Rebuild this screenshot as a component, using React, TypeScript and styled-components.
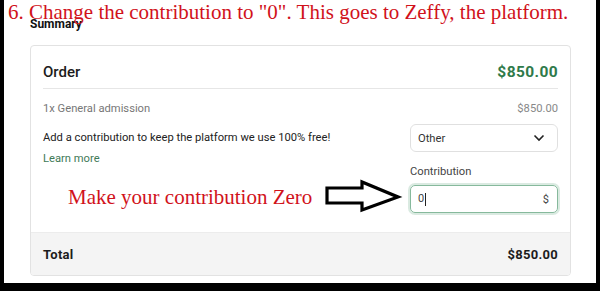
import React from "react";
import styled, { createGlobalStyle } from "styled-components";

const Global = createGlobalStyle`
  html, body { margin: 0; padding: 0; background: #fff; }
  * { box-sizing: border-box; }
`;

const Frame = styled.div`
  position: relative;
  width: 600px;
  height: 291px;
  background: #fff;
  border-left: 4px solid #000;
  border-right: 4px solid #000;
  border-bottom: 8px solid #000;
  padding: 16px 25px 0 26px;
  font-family: Roboto, "Liberation Sans", sans-serif;
  color: #222;
  overflow: hidden;
`;

const Heading = styled.div`
  font-size: 12px;
  font-weight: 700;
  line-height: 16px;
  color: #111;
`;

const Card = styled.div`
  margin-top: 13px;
  border: 1px solid #e2e2e2;
  border-radius: 4px;
  background: #fff;
  overflow: hidden;
`;

const Header = styled.div`
  margin: 0 12px;
  height: 43px;
  display: flex;
  align-items: center;
  justify-content: space-between;
  border-bottom: 1px solid #e6e6e6;
  padding-top: 10px;
`;

const Title = styled.div`
  font-size: 15px;
  font-weight: 500;
  color: #1c1c1c;
`;

const Price = styled.div<{ $tone: "green" | "muted" | "dark" }>`
  font-size: ${(p) => (p.$tone === "muted" ? "11.2px" : p.$tone === "green" ? "15.5px" : "13px")};
  font-weight: ${(p) => (p.$tone === "muted" ? 400 : 700)};
  color: ${(p) => (p.$tone === "green" ? "#2f7a4a" : p.$tone === "muted" ? "#888" : "#1c1c1c")};
  letter-spacing: ${(p) => (p.$tone === "muted" ? "0" : "0.4px")};
`;

const Body = styled.div`
  padding: 11px 12px 19px;
  display: flex;
  flex-direction: column;
`;

const Line = styled.div`
  display: flex;
  justify-content: space-between;
  align-items: center;
  height: 16px;
`;

const Muted = styled.div`
  font-size: 11.2px;
  color: #777;
`;

const Contrib = styled.div`
  margin-top: 8px;
  display: grid;
  grid-template-columns: 1fr 148px;
  column-gap: 20px;
`;

const LeftCol = styled.div`
  display: flex;
  flex-direction: column;
  padding-top: 6px;
  gap: 5px;
`;

const Text = styled.div`
  font-size: 11.2px;
  color: #222;
  line-height: 16px;
`;

const Link = styled.div`
  font-size: 11.2px;
  color: #3f7a57;
  line-height: 16px;
`;

const RightCol = styled.div`
  display: flex;
  flex-direction: column;
`;

const Select = styled.div`
  height: 28px;
  border: 1px solid #e0e0e0;
  border-radius: 6px;
  display: flex;
  align-items: center;
  justify-content: space-between;
  padding: 0 12px 0 7px;
  font-size: 11.2px;
  color: #333;
`;

const Label = styled.div`
  margin-top: 12px;
  font-size: 11.2px;
  color: #444;
  line-height: 16px;
`;

const Input = styled.div`
  margin-top: 5px;
  height: 28px;
  border: 1.5px solid #86b99c;
  border-radius: 5px;
  box-shadow: 0 0 0 2px rgba(134, 185, 156, 0.3);
  display: flex;
  align-items: center;
  justify-content: space-between;
  padding: 0 8px 0 7px;
  font-size: 11px;
  color: #444;
`;

const Caret = styled.span`
  display: inline-block;
  width: 1px;
  height: 13px;
  background: #222;
  margin-left: 1px;
  vertical-align: middle;
`;

const Footer = styled.div`
  height: 43px;
  background: #f4f4f4;
  border-top: 1px solid #ececec;
  display: flex;
  align-items: center;
  justify-content: space-between;
  padding: 0 12px;
`;

const Strong = styled.div`
  font-size: 13px;
  font-weight: 700;
  color: #1c1c1c;
  letter-spacing: 0.3px;
`;

const Annotation = styled.div<{ $top: number; $left: number; $size: number }>`
  position: absolute;
  top: ${(p) => p.$top}px;
  left: ${(p) => p.$left}px;
  font-family: "Liberation Serif", "Times New Roman", serif;
  font-size: ${(p) => p.$size}px;
  color: #d1121b;
  white-space: nowrap;
  line-height: 1;
`;

const Arrow = styled.svg`
  position: absolute;
  left: 321px;
  top: 179px;
`;

export default function App() {
  return (
    <>
      <Global />
      <Frame>
        <Heading>Summary</Heading>
        <Card>
          <Header>
            <Title>Order</Title>
            <Price $tone="green">$850.00</Price>
          </Header>
          <Body>
            <Line>
              <Muted>1x General admission</Muted>
              <Price $tone="muted">$850.00</Price>
            </Line>
            <Contrib>
              <LeftCol>
                <Text>Add a contribution to keep the platform we use 100% free!</Text>
                <Link>Learn more</Link>
              </LeftCol>
              <RightCol>
                <Select>
                  <span>Other</span>
                  <svg width="12" height="8" viewBox="0 0 12 8">
                    <path d="M1.5 1.5 L6 6 L10.5 1.5" fill="none" stroke="#222" strokeWidth="1.6" />
                  </svg>
                </Select>
                <Label>Contribution</Label>
                <Input>
                  <span>
                    0<Caret />
                  </span>
                  <span>$</span>
                </Input>
              </RightCol>
            </Contrib>
          </Body>
          <Footer>
            <Strong>Total</Strong>
            <Strong>$850.00</Strong>
          </Footer>
        </Card>
        <Annotation $top={2} $left={4} $size={21}>
          6. Change the contribution to "0". This goes to Zeffy, the platform.
        </Annotation>
        <Annotation $top={187} $left={64} $size={21}>
          Make your contribution Zero
        </Annotation>
        <Arrow width="80" height="36" viewBox="0 0 80 36">
          <path
            d="M2 9 L37 9 L37 3 L73 18 L37 31 L37 24 L2 24 Z"
            fill="#fff"
            stroke="#000"
            strokeWidth="3.2"
            strokeLinejoin="miter"
          />
        </Arrow>
      </Frame>
    </>
  );
}
